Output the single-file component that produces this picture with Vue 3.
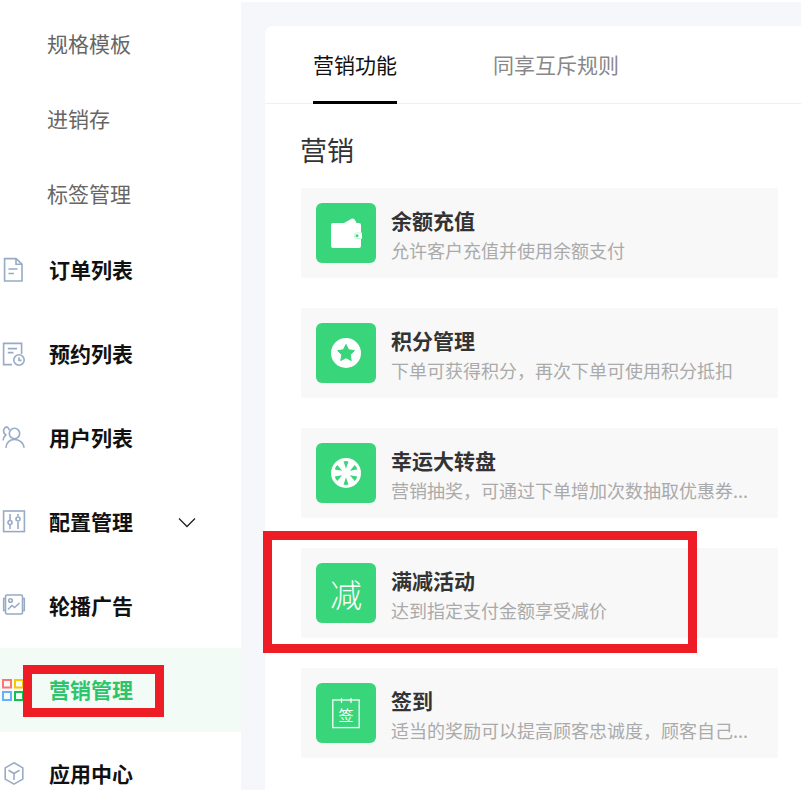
<script setup>
const subItems = ['规格模板', '进销存', '标签管理']
const menu = [
  { key: 'doc', label: '订单列表' },
  { key: 'clock', label: '预约列表' },
  { key: 'user', label: '用户列表' },
  { key: 'slider', label: '配置管理', arrow: true },
  { key: 'pic', label: '轮播广告' },
  { key: 'grid', label: '营销管理', active: true },
  { key: 'cube', label: '应用中心' }
]
const cards = [
  { key: 'wallet', title: '余额充值', desc: '允许客户充值并使用余额支付' },
  { key: 'star', title: '积分管理', desc: '下单可获得积分，再次下单可使用积分抵扣' },
  { key: 'wheel', title: '幸运大转盘', desc: '营销抽奖，可通过下单增加次数抽取优惠券...' },
  { key: 'minus', title: '满减活动', desc: '达到指定支付金额享受减价' },
  { key: 'sign', title: '签到', desc: '适当的奖励可以提高顾客忠诚度，顾客自己...' }
]
</script>

<template>
  <div class="page">
    <aside class="sidebar">
      <div class="sub-list">
        <div v-for="s in subItems" :key="s" class="sub-item">{{ s }}</div>
      </div>
      <div v-for="m in menu" :key="m.key" class="menu-item" :class="{ active: m.active }">
        <svg class="menu-icon" viewBox="0 0 24 24" fill="none" stroke="#98abc5" stroke-width="1.6">
          <template v-if="m.key === 'doc'">
            <path d="M3.6 0.6H15L21 6.2V23H3.6Z" />
            <path d="M15 0.6V6.2H21" />
            <path d="M7.5 11H16.5M7.5 15.5H13" />
          </template>
          <template v-else-if="m.key === 'clock'">
            <path d="M11 22.6H2.6V1.4H20.6V12" />
            <path d="M6.8 6.6H16M6.8 10.6H12.5" />
            <circle cx="18" cy="18" r="5.2" />
            <path d="M18 15.2V18.4H20.6" />
          </template>
          <template v-else-if="m.key === 'user'">
            <circle cx="13.5" cy="7.5" r="5.2" />
            <path d="M5 21.8C5.6 16 9 13.5 13.5 13.5S22.6 16.3 23 21.8" />
            <path d="M8.2 4A4.6 4.6 0 0 0 5.6 0.8A4.4 4.4 0 0 0 4.8 8.8C3 10.5 2.3 12 2 14.4" />
          </template>
          <template v-else-if="m.key === 'slider'">
            <rect x="2.6" y="1" width="20.8" height="20.6" />
            <path d="M9 4V10M9 15V19M17 4V6M17 12V19" />
            <circle cx="9" cy="12.5" r="2" />
            <circle cx="17" cy="9" r="2" />
          </template>
          <template v-else-if="m.key === 'pic'">
            <rect x="4.5" y="1" width="17" height="19" rx="1.5" />
            <path d="M4.5 4.5H2.7V16.5H4.5M21.5 4.5H23.3V16.5H21.5" />
            <circle cx="9.5" cy="6.5" r="1.8" />
            <path d="M7 15.5L11 11.5L13.5 13.5L18.5 9" />
          </template>
          <template v-else-if="m.key === 'grid'">
            <rect x="2" y="2" width="8" height="7.5" stroke="#ff7376" stroke-width="2" />
            <rect x="14" y="2" width="8" height="7.5" stroke="#fdc500" stroke-width="2" />
            <rect x="2" y="14" width="8" height="8" stroke="#68aefc" stroke-width="2" />
            <rect x="14" y="14" width="8" height="8" stroke="#0ec24c" stroke-width="2" />
          </template>
          <template v-else>
            <path d="M13 0.8L21.8 5.9V17.1L13 22.2L4.2 17.1V5.9Z" />
            <path d="M7.5 8.3L13 11.5L18.5 8.3M13 11.5V18" />
          </template>
        </svg>
        <span class="menu-label">{{ m.label }}</span>
        <svg v-if="m.arrow" class="chevron" viewBox="0 0 18 11" fill="none" stroke="#222" stroke-width="1.3">
          <path d="M1 1.5L9 9.5L17 1.5" />
        </svg>
      </div>
    </aside>

    <main class="content">
      <section class="panel">
        <nav class="tabs">
          <div class="tab on">营销功能</div>
          <div class="tab">同享互斥规则</div>
        </nav>
        <div class="body">
          <h2 class="heading">营销</h2>
          <div class="card-list">
            <article v-for="c in cards" :key="c.key" class="card">
              <div class="badge">
                <span v-if="c.key === 'minus'" class="badge-text">减</span>
                <svg v-else viewBox="0 0 60 60" width="60" height="60">
                  <template v-if="c.key === 'wallet'">
                    <path d="M28 20L36 15.5C37.5 15 39 16 40.5 20Z" fill="#fff" />
                    <path d="M17 20H43A2 2 0 0 1 45 22V29.5H46V36H45V43A2 2 0 0 1 43 45H17A2 2 0 0 1 15 43V22A2 2 0 0 1 17 20Z" fill="#fff" />
                    <path d="M45.5 30H40.5A2.8 2.8 0 0 0 40.5 35.5H45.5" fill="none" stroke="#39d57b" stroke-width="0.5" opacity="0.6" />
                    <circle cx="41" cy="32.7" r="1.5" fill="#39d57b" />
                  </template>
                  <template v-else-if="c.key === 'star'">
                    <circle cx="30" cy="30" r="15" fill="#fff" />
                    <path d="M30 21.5L32.6 26.8L38.4 27.6L34.2 31.7L35.2 37.5L30 34.8L24.8 37.5L25.8 31.7L21.6 27.6L27.4 26.8Z" fill="#39d57b" stroke="#39d57b" stroke-width="1" stroke-linejoin="round" />
                  </template>
                  <template v-else-if="c.key === 'wheel'">
                    <circle cx="30" cy="30" r="15" fill="#fff" />
                    <g fill="#39d57b">
                      <path v-for="a in [0, 60, 120, 180, 240, 300]" :key="a" :transform="`rotate(${a} 30 30)`" d="M30 25.5L27.5 18.5Q30 17.6 32.5 18.5Z" />
                    </g>
                    <circle cx="30" cy="30" r="3.2" fill="#fff" />
                  </template>
                  <template v-else>
                    <rect x="16.8" y="17" width="26.4" height="27.6" fill="none" stroke="#fff" stroke-width="1.3" />
                    <path d="M25.5 15V20M35 15V20" stroke="#fff" stroke-width="1.2" fill="none" />
                    <text x="30" y="37.5" text-anchor="middle" class="sign-text">签</text>
                  </template>
                </svg>
              </div>
              <div class="info">
                <div class="title">{{ c.title }}</div>
                <div class="desc">{{ c.desc }}</div>
              </div>
            </article>
          </div>
        </div>
      </section>
    </main>

    <div class="mark mark-card"></div>
    <div class="mark mark-menu"></div>
  </div>
</template>

<style scoped>
.page {
  position: relative;
  display: flex;
  width: 801px;
  height: 790px;
  overflow: hidden;
  background: #fff;
  font-family: "Noto Sans CJK SC", "Liberation Sans", sans-serif;
}
.sidebar {
  flex: 0 0 241px;
  background: #fff;
}
.sub-list {
  height: 228px;
  padding-top: 6px;
  box-sizing: border-box;
}
.sub-item {
  height: 75px;
  line-height: 75px;
  padding-left: 47px;
  font-size: 21px;
  color: #666;
}
.menu-item {
  display: flex;
  align-items: center;
  height: 84px;
  padding-left: 1px;
  font-size: 21px;
  font-weight: 700;
  color: #111;
}
.menu-item.active {
  background: #f3fbf7;
  color: #2dc46c;
}
.menu-label {
  margin-bottom: 2px;
}
.menu-icon {
  flex: none;
  width: 24px;
  height: 24px;
  margin-right: 24px;
  overflow: visible;
}
.chevron {
  width: 18px;
  height: 11px;
  margin-left: 45px;
}
.content {
  flex: 1;
  margin-top: 2px;
  padding: 24px 0 0 24px;
  background: #f5f7fb;
  min-width: 0;
}
.panel {
  height: 900px;
  background: #fff;
  border-radius: 8px 0 0 0;
}
.tabs {
  display: flex;
  gap: 96px;
  height: 78px;
  padding-left: 48px;
  box-sizing: border-box;
  border-bottom: 1px solid #f0f0f0;
}
.tab {
  position: relative;
  line-height: 76px;
  font-size: 21px;
  color: #888;
}
.tab.on {
  color: #111;
}
.tab.on::after {
  content: "";
  position: absolute;
  left: 0;
  right: 0;
  top: 75px;
  height: 3px;
  background: #000;
}
.body {
  padding: 0 23px 0 36px;
}
.heading {
  margin: 0 0 0 -1px;
  height: 84px;
  line-height: 92px;
  font-size: 27px;
  font-weight: 400;
  color: #333;
}
.card-list {
  display: flex;
  flex-direction: column;
  gap: 30px;
}
.card {
  display: flex;
  align-items: center;
  gap: 15px;
  height: 90px;
  padding-left: 15px;
  background: #f8f8f8;
}
.badge {
  flex: none;
  display: flex;
  align-items: center;
  justify-content: center;
  width: 60px;
  height: 60px;
  border-radius: 6px;
  background: #39d57b;
}
.badge-text {
  font-size: 32px;
  font-weight: 300;
  color: #fff;
}
.sign-text {
  font-size: 15px;
  fill: #fff;
}
.info {
  align-self: flex-start;
  padding-top: 17px;
  min-width: 0;
}
.title {
  height: 31px;
  line-height: 31px;
  font-size: 21px;
  font-weight: 700;
  color: #333;
}
.desc {
  height: 27px;
  margin-top: 1px;
  line-height: 27px;
  font-size: 18px;
  color: #aaa;
  white-space: nowrap;
}
.mark {
  position: absolute;
  box-sizing: border-box;
  border: 9px solid #ee1c25;
}
.mark-card {
  left: 263px;
  top: 531px;
  width: 434px;
  height: 122px;
}
.mark-menu {
  left: 23px;
  top: 665px;
  width: 141px;
  height: 52px;
}
</style>

<style>
html, body {
  margin: 0;
  overflow: hidden;
}
</style>
